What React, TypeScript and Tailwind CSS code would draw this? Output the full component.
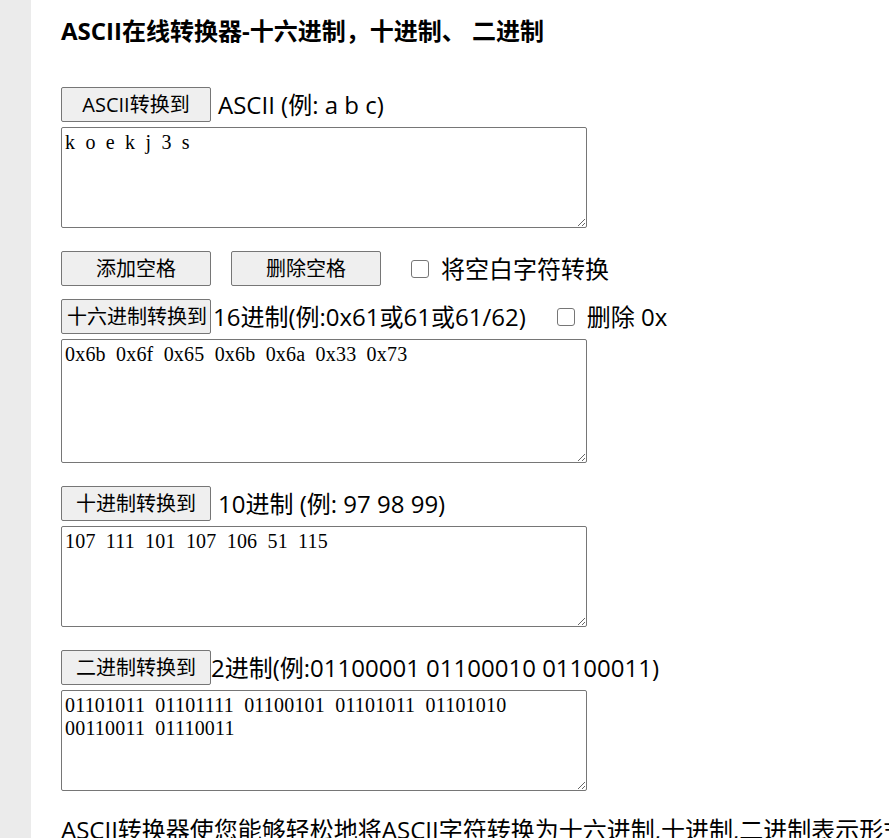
import React from "react";

const sans = "font-['Open_Sans','Noto_Sans_CJK_SC',sans-serif]";
const serif = "font-['Liberation_Serif','Noto_Sans_CJK_SC',serif]";

function Btn({ children }: { children: React.ReactNode }) {
  return (
    <button
      className={`${sans} w-[150px] h-[35px] shrink-0 px-[5px] overflow-hidden whitespace-nowrap text-center text-[20px] leading-none text-black bg-[#efefef] border border-[#767676] rounded-[2px]`}
    >
      {children}
    </button>
  );
}

function Box() {
  return <span className="inline-block w-[18px] h-[18px] shrink-0 bg-white border border-[#767676] rounded-[3px]" />;
}

function Area({ value, h = "h-[101px]" }: { value: string; h?: string }) {
  return (
    <textarea
      readOnly
      defaultValue={value}
      className={`${serif} block w-[526px] ${h} mt-[5px] px-[3px] py-[3px] text-[20px] leading-[23px] tracking-[0.2px] [word-spacing:5px] text-black bg-white border border-[#767676] rounded-[2px] outline-none`}
    />
  );
}

export default function App() {
  return (
    <div className={`${sans} w-[889px] h-[838px] overflow-hidden flex bg-white text-black`}>
      <div className="w-[31px] shrink-0 bg-[#ebebeb]" />
      <div className="pl-[30px] pt-[15px] flex-1 min-w-0">
        <h1 className="text-[24px] font-bold leading-[32px] whitespace-nowrap">ASCII在线转换器-十六进制，十进制、 二进制</h1>

        <div className="mt-[40px] flex items-center gap-[7px] text-[24px] leading-none">
          <Btn>ASCII转换到</Btn>
          <span>ASCII (例: a b c)</span>
        </div>
        <Area value="k o e k j 3 s" />

        <div className="mt-[23px] flex items-center text-[24px] leading-none">
          <Btn>添加空格</Btn>
          <div className="ml-[20px]"><Btn>删除空格</Btn></div>
          <div className="ml-[30px] flex items-center gap-[12px]">
            <Box />
            <span>将空白字符转换</span>
          </div>
        </div>

        <div className="mt-[13px] flex items-center text-[24px] leading-none whitespace-nowrap">
          <Btn>十六进制转换到</Btn>
          <span className="ml-[2px]">16进制(例:0x61或61或61/62)</span>
          <div className="ml-[31px] flex items-center gap-[12px]">
            <Box />
            <span>删除 0x</span>
          </div>
        </div>
        <Area value="0x6b 0x6f 0x65 0x6b 0x6a 0x33 0x73" h="h-[124px]" />

        <div className="mt-[23px] flex items-center gap-[7px] text-[24px] leading-none">
          <Btn>十进制转换到</Btn>
          <span>10进制 (例: 97 98 99)</span>
        </div>
        <Area value="107 111 101 107 106 51 115" />

        <div className="mt-[23px] flex items-center text-[24px] leading-none whitespace-nowrap">
          <Btn>二进制转换到</Btn>
          <span>2进制(例:01100001 01100010 01100011)</span>
        </div>
        <Area value={"01101011 01101111 01100101 01101011 01101010\n00110011 01110011"} />

        <p className="mt-[22px] text-[24px] leading-[34px] whitespace-nowrap">
          ASCII转换器使您能够轻松地将ASCII字符转换为十六进制,十进制,二进制表示形式。
        </p>
      </div>
    </div>
  );
}
